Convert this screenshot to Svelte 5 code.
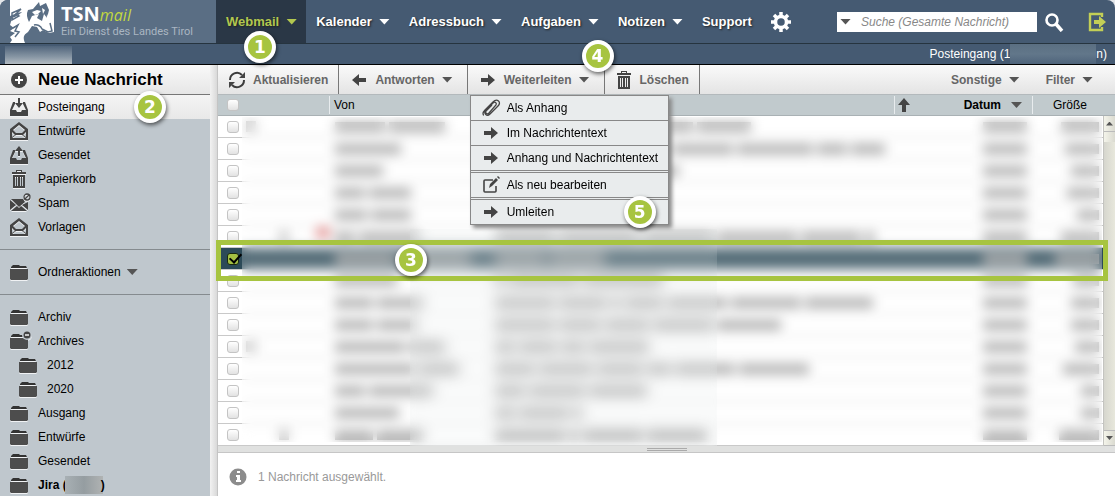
<script lang="ts">
	let nav = [
		{ label: 'Webmail', arrow: true, active: true },
		{ label: 'Kalender', arrow: true },
		{ label: 'Adressbuch', arrow: true },
		{ label: 'Aufgaben', arrow: true },
		{ label: 'Notizen', arrow: true },
		{ label: 'Support', arrow: false }
	];

	let folders = [
		{ label: 'Posteingang', icon: 'inbox', active: true },
		{ label: 'Entwürfe', icon: 'envelope' },
		{ label: 'Gesendet', icon: 'outbox' },
		{ label: 'Papierkorb', icon: 'trash' },
		{ label: 'Spam', icon: 'spam' },
		{ label: 'Vorlagen', icon: 'envelope' }
	];

	let ownFolders = [
		{ label: 'Archiv', icon: 'folder' },
		{ label: 'Archives', icon: 'folderOpen' },
		{ label: '2012', icon: 'folder', sub: true },
		{ label: '2020', icon: 'folder', sub: true },
		{ label: 'Ausgang', icon: 'folder' },
		{ label: 'Entwürfe', icon: 'folder' },
		{ label: 'Gesendet', icon: 'folder' }
	];

	let menu = [
		{ label: 'Als Anhang', icon: 'clip' },
		{ label: 'Im Nachrichtentext', icon: 'right' },
		{ label: 'Anhang und Nachrichtentext', icon: 'right' },
		{ label: 'Als neu bearbeiten', icon: 'edit', group: true },
		{ label: 'Umleiten', icon: 'right', group: true, badge: 5 }
	];

	// word widths of the hidden sender and subject, width of the hidden size
	let mails = [
		{ flag: 'a', from: [50, 56], subject: [60, 70, 60, 54], size: 38 },
		{ from: [66], subject: [90, 80, 60, 76, 30, 34], size: 34 },
		{ from: [48], subject: [90, 90], size: 28 },
		{ from: [30, 42], subject: [90, 60], size: 32 },
		{ from: [32, 40], subject: [80, 70], size: 22 },
		{ flag: 'b', red: true, from: [20, 60], subject: [60, 80, 70, 80, 60, 10], size: 38 },
		{ from: [60, 72], subject: [50, 56], size: 44, checked: true },
		{ from: [62], subject: [10, 70, 80], size: 26 },
		{ from: [38, 46], subject: [60, 48, 10, 38, 60, 70, 68], size: 28 },
		{ from: [38, 40], subject: [60, 42, 44, 60, 64], size: 28 },
		{ flag: 'a', from: [70, 36], subject: [20, 38, 24, 60], size: 24 },
		{ from: [80, 40], subject: [40, 54, 46, 24, 60, 70], size: 36 },
		{ from: [30, 64], subject: [30, 56, 58], size: 18 },
		{ from: [64], subject: [20, 50, 10], size: 18 },
		{ flag: 'b', from: [38, 46], subject: [70, 10, 60, 60], size: 40 }
	];

	let selected = mails.map((m) => !!m.checked);
	let search = '';
</script>

{#snippet icon(name)}
	<svg class="icon" viewBox="0 0 18 18" aria-hidden="true">
		{#if name === 'inbox' || name === 'outbox'}
			<path fill-rule="evenodd" d="M3 4h2v2l-3 6h4l1 2h4l1-2h4l-3-6V4h2l3 8v6H0v-6z" />
			{#if name === 'inbox'}
				<path d="M8 0h2v5h3l-4 5-4-5h3z" />
			{:else}
				<path d="M8 10h2V5h3L9 0 5 5h3z" />
			{/if}
		{:else if name === 'envelope'}
			<path fill-rule="evenodd" d="M9 0l9 7v11H0V7zM9 3L3 8l3 3h6l3-3zM2 10v5l3-2zM16 10v5l-3-2zM6 13l-4 3h14l-4-3z" />
		{:else if name === 'trash'}
			<path fill-rule="evenodd" d="M6 0h6v2h4v2H2V2h4zm1 1v1h4V1zM3 5h12v13H3zm2 2v9h1V7zm2 0v9h1V7zm3 0v9h1V7zm2 0v9h1V7z" />
		{:else if name === 'spam'}
			<path d="M0 6l6 5-6 5zM1 5h12l2 3-6 5zM18 8v8l-6-5zM1 17l6-5 2 2 2-2 6 5z" />
			<circle cx="17" cy="3" r="3" fill="none" stroke="#444" stroke-width="1.300" />
			<path d="M15 5l4-4" stroke="#444" stroke-width="1.300" />
		{:else if name === 'folder' || name === 'folderOpen'}
			<path d="M1 4l2-2h6l1 1h6l1 2H1z" fill="#333" />
			<path d="M0 6h18v10l-1 1H1l-1-1z" fill="#4d4d4d" />
			{#if name === 'folderOpen'}
				<circle cx="17" cy="3" r="5" fill="#bfc7cd" />
				<circle cx="17" cy="3" r="3.500" />
				<path d="M15 3h4" stroke="#fff" stroke-width="1.400" />
			{/if}
		{:else if name === 'plus'}
			<circle cx="9" cy="9" r="8" />
			<path d="M9 5v8M5 9h8" stroke="#fff" stroke-width="2" />
		{:else if name === 'refresh'}
			<path d="M2 9a7 7 0 0 1 12-5M16 9a7 7 0 0 1-12 5" fill="none" stroke="#3c3c3c" stroke-width="2" />
			<path d="M17 1v6h-6zM1 17v-6h6z" />
		{:else if name === 'left'}
			<path d="M2 9l7-6v4h7v4H9v4z" />
		{:else if name === 'right'}
			<path d="M16 9L9 3v4H2v4h7v4z" />
		{:else if name === 'up'}
			<path d="M9 2l6 7h-4v7H7V9H3z" />
		{:else if name === 'clip'}
			<path
				d="M4 11l7-7c2-2 4 0 3 2l-7 8c-2 2-4 0-3-2l6-6M4 11c-3 4 1 7 4 4l8-8c4-4-1-8-5-4l-8 8c-3 3-2 5-1 5"
				fill="none"
				stroke="#444"
				stroke-width="1.300"
			/>
		{:else if name === 'edit'}
			<path d="M11 4H3a1 1 0 0 0-1 1v10a1 1 0 0 0 1 1h10a1 1 0 0 0 1-1v-5" fill="none" stroke="#444" stroke-width="1.600" />
			<path d="M7 12l1-4 6-6 2 2-6 6zM15 1l1-1 2 2-1 1z" />
		{:else if name === 'info'}
			<circle cx="9" cy="9" r="8.500" fill="#8c8c8c" />
			<path d="M8 3h3v2H8zM7 7h4v5h1v2H7v-2h1V9H7z" fill="#fff" />
		{/if}
	</svg>
{/snippet}

{#snippet words(list)}
	<span class="words">
		{#each list as w}
			<i style="width: {w}px"></i>
		{/each}
	</span>
{/snippet}

<div class="app">
	<header>
		<a class="logo" href="#start">
			<svg viewBox="0 0 44 43" aria-hidden="true">
				<path d="M0 0h44v32l-5 1-6-3-3 2-3-5-5-1-4 6c-5 3-5 6-3 11H0l2-3-2-3 5-4-5-2 4-3-4-3 2-7c4-1 7-3 10-6L7 13l-7 3z" fill="#fff" />
				<path d="M18 10l5-1 6-7 1 4 6-3 3 7-2 8-3-4-2 7-5-3 2-4-7 2-3 6c-2-4-3-8-1-12z" fill="#5a6e84" />
				<path d="M22 12l5-2 4 1-3 3-3 1zM32 8l3 2-2 4zM37 14l3 8-4 4z" fill="#fff" />
				<path d="M2 13l9-4-5 5 3 2-7 4zM3 28l5-3-3 6 4 1-4 5M24 25c3-1 7 1 8 4l6 3 4-1-2-8" fill="none" stroke="#5a6e84" stroke-width="1.500" />
			</svg>
			<span>
				<b>TSN<em>mail</em></b>
				<small>Ein Dienst des Landes Tirol</small>
			</span>
		</a>
		<nav>
			{#each nav as item}
				<a href="#{item.label}" class:active={item.active}>
					{item.label}
					{#if item.arrow}<span class="arrow"></span>{/if}
					{#if item.active}<span class="badge badge1">1</span>{/if}
				</a>
			{/each}
			<button class="plain gear" aria-label="Einstellungen">
				<svg viewBox="0 0 20 20" aria-hidden="true">
					<circle cx="10" cy="10" r="5.500" fill="none" stroke="#fff" stroke-width="3.500" />
					<path d="M10 0v4M10 16v4M0 10h4M16 10h4M3 3l3 3M14 14l3 3M3 17l3-3M14 6l3-3" stroke="#fff" stroke-width="3.500" />
				</svg>
			</button>
		</nav>
		<form class="search">
			<label>
				<span class="arrow"></span>
				<input type="text" placeholder="Suche (Gesamte Nachricht)" aria-label="Suche" bind:value={search} />
			</label>
			<button type="button" class="plain" aria-label="Suchen">
				<svg viewBox="0 0 20 20" aria-hidden="true">
					<circle cx="8" cy="8" r="5.500" fill="none" stroke="#fff" stroke-width="2.600" />
					<path d="M12 12l6 7" stroke="#fff" stroke-width="3.500" />
				</svg>
			</button>
			<a class="plain logout" href="#logout" aria-label="Abmelden">
				<svg viewBox="0 0 20 20" aria-hidden="true">
					<path d="M15 5V2H3v16h12v-3" fill="none" stroke="#c3cf56" stroke-width="2.400" />
					<path d="M7 8h5V4l7 6-7 6v-4H7z" fill="#c3cf56" />
				</svg>
			</a>
		</form>
	</header>

	<div class="subbar">
		<span class="hiddenUser"></span>
		<span class="current">Posteingang (1<i></i>n)</span>
	</div>

	<div class="content">
		<aside>
			<button class="new">{@render icon('plus')}Neue Nachricht</button>
			<ul>
				{#each folders as f}
					<li class:active={f.active}>
						<a href="#{f.label}">{@render icon(f.icon)}{f.label}</a>
						{#if f.active}<span class="badge badge2">2</span>{/if}
					</li>
				{/each}
			</ul>
			<div class="actions">
				<button>{@render icon('folder')}Ordneraktionen <span class="arrow"></span></button>
			</div>
			<ul class="own">
				{#each ownFolders as f}
					<li class:sub={f.sub}>
						<a href="#{f.label}">{@render icon(f.icon)}{f.label}</a>
					</li>
				{/each}
				<li><a class="bold" href="#Jira">{@render icon('folder')}<span>Jira (<i></i>)</span></a></li>
			</ul>
		</aside>
		<div class="handle"></div>

		<main>
			<div class="toolbar">
				<button>{@render icon('refresh')}Aktualisieren</button>
				<button>{@render icon('left')}Antworten <span class="arrow"></span></button>
				<div class="drop">
					<button>{@render icon('right')}Weiterleiten <span class="arrow"></span></button>
					<span class="badge badge4">4</span>
					<div class="menu">
						{#each menu as m}
							<button class:group={m.group}>
								{@render icon(m.icon)}{m.label}
								{#if m.badge}<span class="badge badge5">{m.badge}</span>{/if}
							</button>
						{/each}
					</div>
				</div>
				<button>{@render icon('trash')}Löschen</button>
				<button class="right">Sonstige <span class="arrow"></span></button>
				<button class="last">Filter <span class="arrow"></span></button>
			</div>

			<div class="list">
				<table>
					<colgroup>
						<col class="cCheck" />
						<col class="cFlag" />
						<col class="cFrom" />
						<col />
						<col class="cDate" />
						<col class="cSize" />
					</colgroup>
					<thead>
						<tr>
							<th><input type="checkbox" aria-label="Alle auswählen" /></th>
							<th></th>
							<th class="sep">Von</th>
							<th></th>
							<th class="sep">
								<div class="date">{@render icon('up')}<b>Datum</b><span class="arrow"></span></div>
							</th>
							<th class="sep size">Größe</th>
						</tr>
					</thead>
					<tbody>
						{#each mails as m, i}
							<tr class:selected={selected[i]}>
								<td><input type="checkbox" aria-label="Nachricht {i + 1}" bind:checked={selected[i]} /></td>
								<td>
									{#if m.flag}<span class="flag {m.flag}"></span>{/if}
									{#if m.red}<span class="flag red"></span>{/if}
								</td>
								<td>{@render words(m.from)}</td>
								<td>{@render words(m.subject)}</td>
								<td class="num">{@render words([44])}</td>
								<td class="num kb">{@render words([m.size])}</td>
							</tr>
						{/each}
					</tbody>
				</table>
				<div class="veil"></div>
				<div class="veil second"></div>
				<div class="scroll">
					<button aria-label="Nach oben"><span class="tri up"></span></button>
					<span class="thumb"></span>
					<button class="down" aria-label="Nach unten"><span class="tri"></span></button>
				</div>
				<div class="frame"><span class="badge badge3">3</span></div>
			</div>
			<div class="splitter"><span></span></div>
			<p class="info">{@render icon('info')}1 Nachricht ausgewählt.</p>
		</main>
	</div>
</div>

<style>
	:global(body) {
		background: #e4e7ea;
		overflow: hidden;
	}

	.app {
		display: flex;
		flex-direction: column;
		height: 100vh;
		font-family: 'Liberation Sans', Arial, sans-serif;
		font-size: 12px;
		color: #000;
	}

	.app * {
		box-sizing: border-box;
	}

	a {
		color: inherit;
		text-decoration: none;
	}

	button {
		display: flex;
		align-items: center;
		border: none;
		background: none;
		padding: 0;
		font: inherit;
		color: inherit;
		cursor: pointer;
	}

	ul {
		list-style: none;
		margin: 0;
		padding: 0;
	}

	.icon {
		width: 18px;
		height: 18px;
		flex: none;
		fill: #444;
		overflow: visible;
	}

	li .icon,
	.actions .icon {
		filter: drop-shadow(0 1px #f0f2f4);
	}

	.arrow {
		flex: none;
		width: 11px;
		height: 6px;
		background: #555;
		clip-path: polygon(0 0, 100% 0, 50% 100%);
	}

	/* HEADER */
	header {
		display: flex;
		flex: none;
		height: 44px;
		background: #455a72;
		border-bottom: 1px solid #26343f;
		border-radius: 8px 8px 0 0;
		color: #fff;
	}

	.logo {
		display: flex;
		width: 216px;
		padding-left: 10px;
		background: #5a6e84;
		border-radius: 8px 0 0 0;
	}

	.logo svg {
		width: 44px;
		height: 43px;
		margin-right: 7px;
	}

	.logo b {
		display: block;
		margin-top: 4px;
		font: bold 20px/20px 'Open Sans', sans-serif;
	}

	.logo em {
		font-size: 16px;
		font-weight: normal;
		color: #c3d840;
	}

	.logo small {
		display: block;
		font: 11px/13px Roboto, sans-serif;
		color: #aab6c2;
		white-space: nowrap;
	}

	nav {
		display: flex;
		font-size: 13px;
		font-weight: bold;
		text-shadow: 1px 1px 2px #222;
	}

	nav a {
		position: relative;
		display: flex;
		align-items: center;
		gap: 7px;
		padding: 0 9px 0 10px;
	}

	nav .arrow {
		background: #fff;
	}

	nav .active {
		background: #2a3746;
		color: #b2c74f;
	}

	nav .active .arrow {
		background: #b2c74f;
	}

	.gear {
		margin-left: 10px;
	}

	.plain svg {
		display: block;
		width: 20px;
		height: 20px;
	}

	.search {
		display: flex;
		align-items: center;
		margin: 0 8px 0 auto;
	}

	.search label {
		display: flex;
		align-items: center;
		width: 200px;
		height: 20px;
		padding-left: 3px;
		background: #fff;
	}

	.search input {
		flex: 1;
		min-width: 0;
		border: none;
		outline: none;
		padding: 0 0 0 10px;
		background: none;
		font: italic 12px 'Liberation Sans', Arial, sans-serif;
	}

	.search input::placeholder {
		color: #888;
	}

	.search button {
		margin-left: 7px;
	}

	.logout {
		margin-left: 23px;
	}

	.subbar {
		display: flex;
		flex: none;
		justify-content: space-between;
		height: 21px;
		padding-left: 5px;
		padding-right: 8px;
		background: #455a72;
		border-bottom: 1px solid #000;
		color: #fff;
		line-height: 20px;
	}

	.hiddenUser {
		width: 67px;
		margin-top: 2px;
		background: linear-gradient(#50647b, #8796a4 60%, #b3bbc2);
	}

	.current {
		display: flex;
	}

	.current i {
		width: 86px;
		background: linear-gradient(#5b6f82, #62778a 50%, #4f647b);
	}

	.content {
		display: flex;
		flex: 1;
		min-height: 0;
	}

	/* SIDEBAR */
	aside {
		width: 210px;
		flex: none;
		overflow: hidden;
		background: #bfc7cd;
	}

	.new {
		width: 100%;
		height: 30px;
		padding-left: 10px;
		gap: 10px;
		background: linear-gradient(#f9f9f9, #e6e6e6);
		border-bottom: 1px solid #777;
		font-size: 17px;
		font-weight: bold;
	}

	li {
		position: relative;
	}

	li a,
	.actions button {
		display: flex;
		align-items: center;
		gap: 10px;
		height: 24px;
		padding-left: 10px;
	}

	li.active {
		background: linear-gradient(#f4f4f4, #e8e8e8);
	}

	li.sub a {
		padding-left: 19px;
	}

	.actions {
		margin-top: 10px;
		padding: 10px 0;
		border-top: 1px solid #858b8f;
		border-bottom: 1px solid #858b8f;
	}

	.actions .arrow {
		margin-left: -4px;
	}

	.own {
		padding-top: 10px;
	}

	.bold {
		font-weight: bold;
	}

	.bold span {
		display: flex;
		align-items: center;
		white-space: pre;
	}

	.bold i {
		width: 38px;
		height: 18px;
		margin: 0 -2px;
		background: linear-gradient(90deg, #a8b0b4, #959da1 50%, #b0b3b3);
	}

	.handle {
		width: 8px;
		flex: none;
		background: linear-gradient(90deg, #f2f2f2, #d9d9d9);
		border-right: 1px solid #c4c4c4;
	}

	/* MAIN */
	main {
		display: flex;
		flex-direction: column;
		flex: 1;
		min-width: 0;
		background: #fff;
	}

	.toolbar {
		display: flex;
		flex: none;
		height: 30px;
		background: linear-gradient(#fafafa, #e4e4e4);
		border-bottom: 1px solid #b3b9bc;
		color: #666;
		font-weight: bold;
	}

	.toolbar > button,
	.drop > button {
		height: 29px;
		gap: 7px;
		padding: 0 10px;
		border-right: 1px solid #777;
	}

	.toolbar > button:nth-child(2),
	.drop > button {
		padding: 0 14px 0 11px;
	}

	.toolbar .right {
		margin-left: auto;
		border: none;
	}

	.toolbar .last {
		border: none;
		padding: 0 22px 0 16px;
	}

	.drop {
		position: relative;
	}

	.menu {
		position: absolute;
		top: 30px;
		left: 2px;
		z-index: 3;
		width: 199px;
		background: #e9eced;
		border: 1px solid #888;
		border-bottom: none;
		box-shadow: 3px 3px 4px #888;
		font-weight: normal;
		color: #000;
	}

	.menu button {
		position: relative;
		width: 100%;
		height: 25px;
		gap: 7px;
		padding-left: 11px;
		border-bottom: 1px solid #888;
		white-space: nowrap;
	}

	.menu .group {
		height: 26px;
		margin-top: 1px;
		border-top: 1px solid #888;
	}

	.list {
		position: relative;
		flex: none;
	}

	table {
		width: 100%;
		table-layout: fixed;
		border-spacing: 0;
	}

	.cCheck {
		width: 24px;
	}

	.cFlag {
		width: 87px;
	}

	.cFrom {
		width: 160px;
	}

	.cDate {
		width: 138px;
	}

	.cSize {
		width: 83px;
	}

	th {
		height: 21px;
		padding: 0;
		background: #c1cacd;
		border-bottom: 1px solid #a9b1b4;
		font-weight: normal;
		text-align: left;
	}

	.sep {
		padding-left: 5px;
		background: linear-gradient(#e8ecee, #e8ecee) 0 1px / 1px 18px no-repeat #c1cacd;
	}

	th.size {
		padding-left: 21px;
	}

	.date {
		display: flex;
		align-items: center;
		gap: 10px;
		margin-left: -4px;
		padding-right: 10px;
	}

	.date b {
		margin-left: auto;
	}

	td {
		height: 22px;
		padding: 0;
		border-bottom: 1px solid #c9c9c9;
		position: relative;
	}

	td:nth-child(3),
	td:nth-child(4) {
		padding-left: 6px;
	}

	input[type='checkbox'] {
		appearance: none;
		display: block;
		width: 12px;
		height: 12px;
		margin: 0 0 0 9px;
		border: 1px solid #c4c4c4;
		border-radius: 3px;
		background: linear-gradient(#fff, #e2e2e2);
	}

	tbody input:checked {
		position: relative;
		z-index: 1;
		border-color: #1a2a10;
		background: #a4c043;
	}

	tbody input:checked::after {
		content: '';
		position: absolute;
		left: 4px;
		top: -3px;
		width: 5px;
		height: 10px;
		border: solid #000;
		border-width: 0 2px 2px 0;
		transform: rotate(42deg);
	}

	.selected td {
		background: #2c4a58;
	}

	.words {
		display: flex;
		gap: 4px;
		overflow: hidden;
	}

	.words i {
		flex: none;
		height: 10px;
		background: #9f9f9f;
	}

	.num .words {
		justify-content: flex-end;
		padding-right: 5px;
	}

	.kb .words {
		padding-right: 16px;
	}

	.flag {
		position: absolute;
		top: 5px;
		left: 4px;
		width: 10px;
		height: 11px;
		background: #bbb;
	}

	.flag.b {
		left: 37px;
	}

	.flag.red {
		left: 74px;
		top: 1px;
		width: 14px;
		background: #e08080;
	}

	/* blurred message data */
	.veil {
		position: absolute;
		top: 22px;
		bottom: 4px;
		left: 24px;
		right: 13px;
		background: rgba(255, 255, 255, 0.2);
		backdrop-filter: blur(6px);
	}

	.veil.second {
		top: 134px;
		bottom: 0;
		left: 192px;
		right: auto;
		width: 307px;
		background: rgba(225, 230, 230, 0.12);
		backdrop-filter: blur(4px);
	}

	.scroll {
		position: absolute;
		top: 21px;
		bottom: 0;
		right: 0;
		display: flex;
		flex-direction: column;
		width: 12px;
		background: linear-gradient(90deg, #d6d6ce, #e8e8dc);
		border-left: 1px solid #c4c4c0;
	}

	.scroll button {
		justify-content: center;
		height: 16px;
		background: linear-gradient(90deg, #f4f4ea, #dadad0);
		border-bottom: 1px solid #bbb;
	}

	.scroll .thumb {
		height: 10px;
		background: linear-gradient(90deg, #f4f4ea, #dadad0);
	}

	.scroll .down {
		margin-top: auto;
		border-top: 1px solid #bbb;
	}

	.tri {
		width: 7px;
		height: 4px;
		background: #555;
		clip-path: polygon(0 0, 100% 0, 50% 100%);
	}

	.tri.up {
		clip-path: polygon(50% 0, 100% 100%, 0 100%);
	}

	.frame {
		position: absolute;
		top: 145px;
		left: -2px;
		right: 7px;
		height: 41px;
		border: 5px solid #a7c440;
		pointer-events: none;
	}

	.splitter {
		display: flex;
		flex: none;
		justify-content: center;
		align-items: center;
		height: 7px;
		background: #e0e1e0;
		border-bottom: 1px solid #c6c6c6;
	}

	.splitter span {
		width: 40px;
		height: 3px;
		border: solid #aaa;
		border-width: 1px 0;
	}

	.info {
		display: flex;
		align-items: center;
		gap: 11px;
		margin: 15px 0 0 11px;
		color: #999;
	}

	/* BADGES */
	.badge {
		position: absolute;
		z-index: 4;
		width: 32px;
		height: 32px;
		border: 4px solid #fff;
		border-radius: 50%;
		background: #a7c440;
		box-shadow: 1px 2px 4px rgba(0, 0, 0, 0.6);
		color: #fff;
		font: bold 17px/24px 'DejaVu Sans', sans-serif;
		text-align: center;
		text-shadow: none;
	}

	.badge1 {
		top: 31px;
		left: 28px;
	}

	.badge2 {
		top: -4px;
		left: 134px;
	}

	.badge3 {
		top: -1px;
		left: 174px;
	}

	.badge4 {
		top: -25px;
		right: -9px;
	}

	.badge5 {
		top: -4px;
		right: 12px;
	}
</style>
